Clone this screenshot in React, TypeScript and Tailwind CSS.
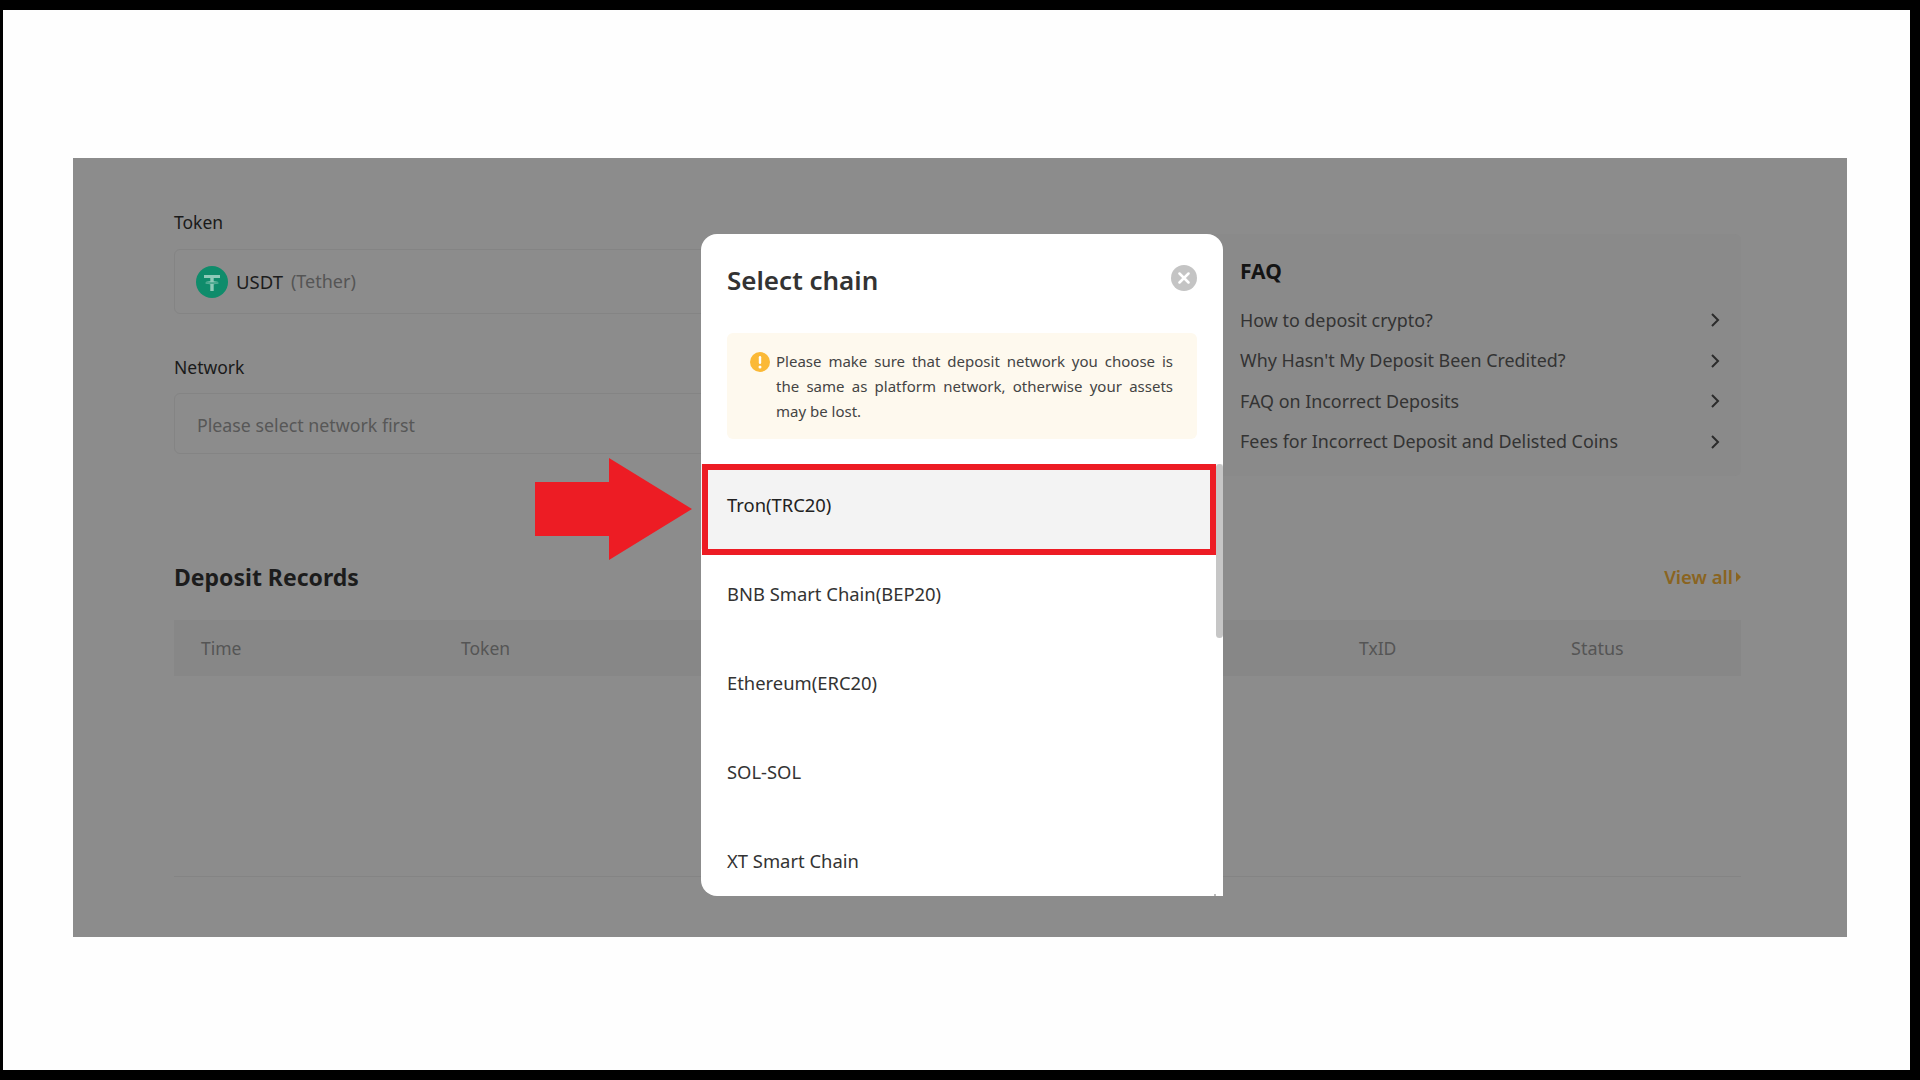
import React from "react";

const font = { fontFamily: '"Noto Sans", "Open Sans", sans-serif' };

function Chevron() {
  return (
    <svg width="10" height="16" viewBox="0 0 10 16" fill="none" stroke="#2b2b2b" strokeWidth="2" className="mr-[1px]">
      <path d="M2 2l6 6-6 6" />
    </svg>
  );
}

function Tether() {
  return (
    <svg width="32" height="32" viewBox="0 0 32 32">
      <circle cx="16" cy="16" r="16" fill="#0f8c6b" />
      <path d="M8 9h16v3h-6.3v3.2c3 .2 5.3.8 5.3 1.5s-2.3 1.300-5.300 1.500V25h-3.400v-6.800c-3-.2-5.300-.8-5.300-1.500s2.300-1.300 5.300-1.500V12H8z" fill="#8fcab8" />
      <path d="M7 16.300c2 1 16 1 18 0" fill="none" stroke="#0f8c6b" strokeWidth="1" />
    </svg>
  );
}

const chains = ["Tron(TRC20)", "BNB Smart Chain(BEP20)", "Ethereum(ERC20)", "SOL-SOL", "XT Smart Chain"];
const faqs = [
  "How to deposit crypto?",
  "Why Hasn't My Deposit Been Credited?",
  "FAQ on Incorrect Deposits",
  "Fees for Incorrect Deposit and Delisted Coins",
];

export default function App() {
  return (
    <div className="w-[1920px] h-[1080px] bg-black pt-[10px] pl-[3px] pr-[10px] pb-[10px] overflow-hidden" style={font}>
      <div className="relative w-full h-full bg-[#fefefe] pt-[148px] pl-[70px]">
        {/* dimmed page */}
        <div className="w-[1774px] h-[779px] bg-[#8c8c8c] pt-[52px] pl-[101px] pr-[106px] flex flex-col">
          <div className="flex justify-between h-[291px]">
            <div className="w-[900px]">
              <div className="h-[24px] leading-[24px] text-[17.5px] text-[#1a1a1a]">Token</div>
              <div className="mt-[15px] h-[65px] rounded-md border border-[#848484] flex items-center pl-[21px] gap-[9px]">
                <Tether />
                <span className="text-[18.5px] text-[#1c1c1c] -ml-[1px]">USDT</span>
                <span className="text-[18px] text-[#555555] -ml-[1px]">(Tether)</span>
              </div>
              <div className="mt-[41px] h-[24px] leading-[24px] text-[17.5px] text-[#1a1a1a]">Network</div>
              <div className="mt-[14px] h-[61px] rounded-md border border-[#848484] flex items-center pl-[22px] pt-[3px]">
                <span className="text-[17.8px] text-[#575757]">Please select network first</span>
              </div>
            </div>
            <div className="w-[560px] h-[242px] mt-[24px] bg-[#8a8a8a] rounded-md pl-[59px] pr-[20px] pt-[21px]">
              <div className="h-[32px] leading-[32px] text-[21px] font-bold text-[#141414]">FAQ</div>
              <div className="mt-[13px] flex flex-col">
                {faqs.map((f) => (
                  <div key={f} className="h-[40.500px] flex items-center justify-between text-[17.9px] text-[#333333]">
                    <span>{f}</span>
                    <Chevron />
                  </div>
                ))}
              </div>
            </div>
          </div>
          <div className="flex justify-between items-center h-[32px] mt-[60px]">
            <span className="text-[23px] font-bold text-[#1c1c1c]">Deposit Records</span>
            <span className="flex items-center gap-[3px] text-[18.5px] font-semibold text-[#8a6420]">
              View all
              <svg width="5" height="10" viewBox="0 0 5 10"><path d="M0 0l5 5-5 5z" fill="#8a6420" /></svg>
            </span>
          </div>
          <div className="mt-[27px] h-[56px] pt-[1px] bg-[#878787] relative flex items-center text-[17.5px] text-[#555555]">
            <span className="w-[287px] pl-[27px]">Time</span>
            <span className="w-[898px]">Token</span>
            <span className="w-[212px]">TxID</span>
            <span className="text-[18px]">Status</span>
          </div>
          <div className="mt-[200px] border-t border-[#848484]" />
        </div>

        {/* arrow */}
        <svg className="absolute left-[532px] top-[448px]" width="160" height="102" viewBox="0 0 160 102">
          <path d="M0 24h74V0l83 51-83 51V78H0z" fill="#ed1c24" />
        </svg>

        {/* modal */}
        <div className="absolute left-[698px] top-[224px] w-[522px] h-[662px] bg-white rounded-t-2xl rounded-bl-2xl overflow-hidden flex flex-col">
          <div className="flex justify-between items-center pl-[26px] pr-[26px] h-[99px] pb-[6px]">
            <span className="text-[26px] font-semibold text-[#333333]">Select chain</span>
            <span className="w-[26px] h-[26px] rounded-full bg-[#c4c4c4] flex items-center justify-center mb-[6px]">
              <svg width="12" height="12" viewBox="0 0 12 12" stroke="#fff" strokeWidth="2.500" strokeLinecap="round">
                <path d="M1.500 1.500l9 9M10.500 1.500l-9 9" />
              </svg>
            </span>
          </div>
          <div className="mx-[26px] h-[106px] bg-[#fef9ee] rounded-md flex pl-[23px] pr-[24px] pt-[16px] gap-[6px]">
            <svg className="mt-[3px] shrink-0" width="20" height="20" viewBox="0 0 20 20">
              <circle cx="10" cy="10" r="10" fill="#fbb936" />
              <rect x="8.800" y="4" width="2.400" height="8" rx="1.200" fill="#fff" />
              <circle cx="10" cy="15" r="1.500" fill="#fff" />
            </svg>
            <p className="text-[15px] leading-[25px] text-[#444444] text-justify">
              Please make sure that deposit network you choose is the same as platform network, otherwise your assets may be lost.
            </p>
          </div>
          <div className="relative mt-[25px] flex-1 overflow-hidden">
            {chains.map((c, i) => (
              <div
                key={c}
                className={`pl-[26px] flex items-center text-[18.4px] ${i === 0 ? "h-[85px] pb-[3px] bg-[#f3f3f3] text-[#222222]" : "h-[89px] text-[#333333]"}`}
              >
                {c}
              </div>
            ))}
            <div className="absolute right-0 top-0 w-[7px] h-[174px] rounded bg-[#c6c6c6]" />
            <div className="absolute right-[7px] bottom-0 w-[2px] h-[2px] bg-[#bbbbbb]" />
          </div>
        </div>

        {/* red highlight */}
        <div className="absolute left-[699px] top-[454px] w-[514px] h-[91px] border-[6px] border-[#ed1c24]" />
      </div>
    </div>
  );
}
